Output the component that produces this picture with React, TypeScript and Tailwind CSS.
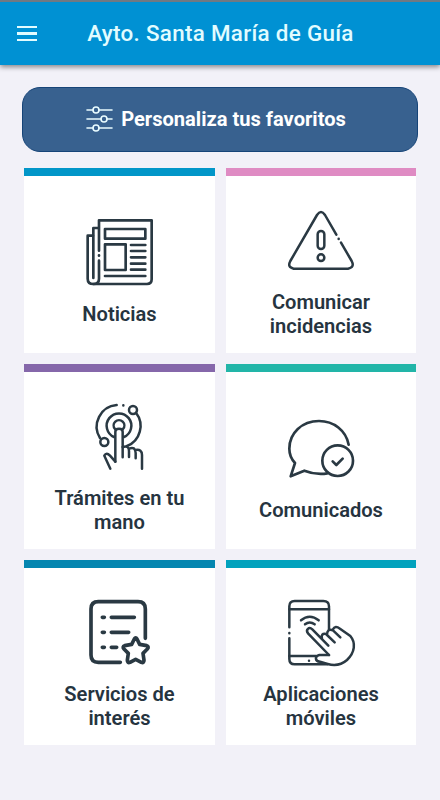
import type { ReactNode } from 'react';

type Tile = {
  title: string;
  bar: string;
  viewBox: string;
  stroke: number;
  icon: ReactNode;
};

const tiles: Tile[] = [
  {
    title: 'Noticias',
    bar: 'bg-[#0296c8]',
    viewBox: '35 27 198 198',
    stroke: 8,
    icon: (
      <>
        <path d="M71 122V31H229V208Q229 222 215 222H54" />
        <path d="M71 152V206Q71 222 54 222Q37 222 37 206V77H53" />
        <path d="M54 204V54H70M71 136V137" />
        <path d="M89 57H210V86H89ZM89 103H151V180H89Z" />
        <path d="M167 105H210M167 123H210M167 142H210M167 161H210M167 179H210M89 198H210" />
      </>
    ),
  },
  {
    title: 'Comunicar incidencias',
    bar: 'bg-[#df8bc3]',
    viewBox: '39 22 198 198',
    stroke: 7.5,
    icon: (
      <>
        <path d="M184 105L150 46Q138 28 126 46L46 184Q36 203 56 207H219Q240 203 230 184L198 129M191 117V118" />
        <rect x="128" y="94" width="20" height="54" rx="10" />
        <circle cx="138" cy="174" r="10" />
      </>
    ),
  },
  {
    title: 'Trámites en tu mano',
    bar: 'bg-[#8567aa]',
    viewBox: '19 24 198 198',
    stroke: 7.5,
    icon: (
      <>
        <path d="M104 200V110Q104 101 115 101Q126 101 126 110V187" />
        <path d="M103 102A16 16 0 1 1 127 102" />
        <path d="M100 126A37 37 0 1 1 130 126" />
        <path d="M58 129A65 65 0 0 1 108 30M128 31V31.5M166 53A65 65 0 0 1 139 153" />
        <circle cx="157" cy="45" r="12" />
        <circle cx="71" cy="141" r="12" />
        <path d="M104 200L88 182Q77 170 71 182L89 221" />
        <path d="M126 156Q145 150 145 168V186M145 161Q164 153 165 174V190M165 165Q184 162 184 180V221" />
      </>
    ),
  },
  {
    title: 'Comunicados',
    bar: 'bg-[#22b5a8]',
    viewBox: '39 15 198 198',
    stroke: 8,
    icon: (
      <>
        <path d="M221 104C213 61 176 33 132 33C81 33 43 69 43 116C43 133 49 147 60 159L47 199L88 182C111 191 133 194 157 190" />
        <circle cx="188" cy="152" r="46" />
        <path d="M173 154L184 165L203 146" />
      </>
    ),
  },
  {
    title: 'Servicios de interés',
    bar: 'bg-[#0586b0]',
    viewBox: '34 27 198 198',
    stroke: 11,
    icon: (
      <>
        <path d="M134 217H68Q46 217 46 195V57Q46 35 68 35H187Q209 35 209 57V145" />
        <path d="M80 82H86M107 82H176M80 127H86M107 127H159M80 172H86M107 172H123" />
        <path d="M176 147Q180 140 184 147L192 163L213 167Q221 170 215 177L202 190L205 211Q205 220 197 217L180 208L163 217Q155 220 155 211L158 190L145 177Q139 170 147 167L168 163Z" />
      </>
    ),
  },
  {
    title: 'Aplicaciones móviles',
    bar: 'bg-[#02a2bd]',
    viewBox: '39 27 198 198',
    stroke: 7.5,
    icon: (
      <>
        <path d="M43 112V49Q43 33 59 33H145Q162 33 162 49V119M43 129V130M43 145V207Q43 223 59 223H157" />
        <path d="M43 58H162M43 198H123M102 212V212.5" />
        <path d="M78 91Q104 70 131 91M90 103Q104 92 119 103" />
        <path d="M162 195H133C119 198 119 214 135 215L158 222C179 228 200 224 216 210C240 187 243 158 226 138L195 116Q180 105 174 118" />
        <path d="M162 195L99 130C91 119 102 109 112 118L160 167M141 146Q137 129 153 132L179 157M156 133Q157 114 174 121L196 142" />
      </>
    ),
  },
];

const App = () => {
  return (
    <div className="flex h-[800px] w-[440px] flex-col overflow-hidden bg-[#f2f1f8] font-['Roboto',sans-serif]">
      <header className="grid h-[65px] shrink-0 grid-cols-[54px_1fr_54px] items-center border-t-2 border-[#717982] bg-[#0091d3] shadow-[0_2px_5px_rgba(0,0,0,0.45)]">
        <button className="flex flex-col gap-1 pl-[17px]" aria-label="Menú">
          <span className="h-[2.5px] w-5 bg-[#e2fcff]" />
          <span className="h-[2.5px] w-5 bg-[#e2fcff]" />
          <span className="h-[2.5px] w-5 bg-[#e2fcff]" />
        </button>
        <h1 className="whitespace-nowrap pl-px text-center text-[22.4px] font-medium tracking-[0.3px] text-[#e2fcff]">
          Ayto. Santa María de Guía
        </h1>
      </header>

      <main className="px-6 pt-[22px]">
        <button className="-mx-0.5 flex h-[65px] w-[396px] items-center justify-center gap-[7px] rounded-[18px] border border-[#164478] bg-[#38618f] pb-px pr-2 text-white">
          <svg className="size-7 shrink-0" viewBox="0 0 28 28" fill="none" stroke="#e9fcff" strokeWidth="1.6" strokeLinecap="round">
            <path d="M1 5H7M13 5H26M1 14H15M21 14H26M1 23H7M13 23H26" />
            <circle cx="10" cy="5" r="3" />
            <circle cx="18" cy="14" r="3" />
            <circle cx="10" cy="23" r="3" />
          </svg>
          <span className="whitespace-nowrap text-[20.1px] font-bold">Personaliza tus favoritos</span>
        </button>

        <div className="mt-4 grid grid-cols-[191px_190px] gap-[11px]">
          {tiles.map((tile) => (
            <button key={tile.title} className="flex h-[185px] flex-col bg-white">
              <div className={`h-2 w-full shrink-0 ${tile.bar}`} />
              <div className="flex w-full flex-1 flex-col items-center justify-center gap-[17px] px-6 pt-4">
                <svg
                  className="size-[66px] shrink-0 overflow-visible"
                  viewBox={tile.viewBox}
                  fill="none"
                  stroke="#2a3943"
                  strokeWidth={tile.stroke}
                  strokeLinecap="round"
                  strokeLinejoin="round"
                >
                  {tile.icon}
                </svg>
                <span className="text-center text-[20.1px] font-semibold leading-6 text-[#26343f]">
                  {tile.title}
                </span>
              </div>
            </button>
          ))}
        </div>
      </main>
    </div>
  );
};

export default App;
